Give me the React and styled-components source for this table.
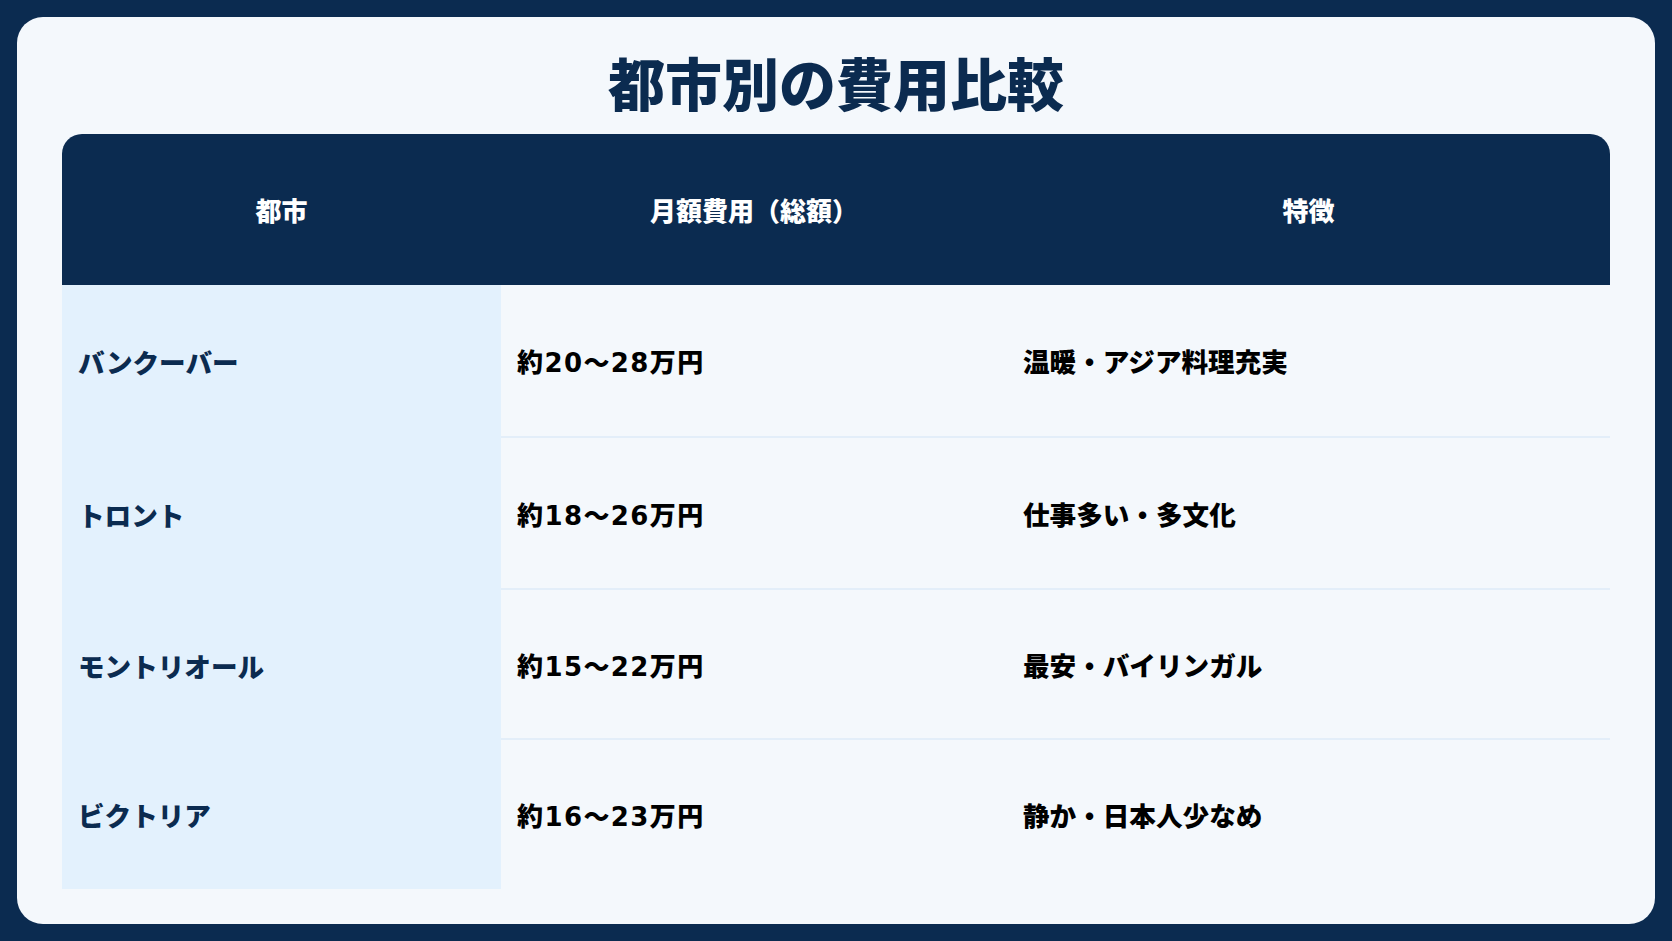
import styled, { createGlobalStyle } from "styled-components";

const GlobalStyle = createGlobalStyle`
  html, body {
    margin: 0;
    padding: 0;
    background: #0b2b50;
  }
  * {
    box-sizing: border-box;
  }
`;

const Page = styled.div`
  width: 1672px;
  height: 941px;
  padding: 17px;
  background: #0b2b50;
  font-family: "Noto Sans CJK JP", "Noto Sans", sans-serif;
`;

const Card = styled.div`
  height: 100%;
  background: #f4f8fc;
  border-radius: 26px;
  padding: 30px 45px 34px;
  display: flex;
  flex-direction: column;
`;

const Title = styled.h1`
  margin: 0 0 19px;
  text-align: center;
  font-size: 57px;
  line-height: 68px;
  font-weight: 900;
  color: #0b2b50;
`;

const Table = styled.div`
  display: grid;
  grid-template-columns: 439px 506px 1fr;
  grid-template-rows: 151px 153px 152px 150px 149px;
  border-radius: 20px 20px 0 0;
  overflow: hidden;
`;

const HeadCell = styled.div`
  background: #0b2b50;
  color: #ffffff;
  font-size: 26px;
  font-weight: 900;
  display: flex;
  align-items: center;
  justify-content: center;
`;

const Cell = styled.div`
  display: flex;
  align-items: center;
  padding: 0 16px;
  font-size: 26.6px;
  font-weight: 900;
  color: ${(p) => (p.$city ? "#0b2b50" : "#000000")};
  background: ${(p) => (p.$city ? "#e3f1fd" : "transparent")};
  border-bottom: ${(p) => (p.$last || p.$city ? "none" : "2px solid #e3eef9")};
`;

const CostCell = styled(Cell)`
  font-family: "DejaVu Sans", "Noto Sans CJK JP", sans-serif;
  font-size: 26px;
  letter-spacing: 1.4px;
`;

const rows = [
  { city: "バンクーバー", cost: "約20〜28万円", note: "温暖・アジア料理充実" },
  { city: "トロント", cost: "約18〜26万円", note: "仕事多い・多文化" },
  { city: "モントリオール", cost: "約15〜22万円", note: "最安・バイリンガル" },
  { city: "ビクトリア", cost: "約16〜23万円", note: "静か・日本人少なめ" },
];

export default function App() {
  return (
    <>
      <GlobalStyle />
      <Page>
        <Card>
          <Title>都市別の費用比較</Title>
          <Table>
            <HeadCell>都市</HeadCell>
            <HeadCell>月額費用（総額）</HeadCell>
            <HeadCell>特徴</HeadCell>
            {rows.map((r, i) => {
              const last = i === rows.length - 1;
              return [
                <Cell key={r.city + "c"} $city>
                  {r.city}
                </Cell>,
                <CostCell key={r.city + "m"} $last={last}>
                  {r.cost}
                </CostCell>,
                <Cell key={r.city + "n"} $last={last}>
                  {r.note}
                </Cell>,
              ];
            })}
          </Table>
        </Card>
      </Page>
    </>
  );
}
